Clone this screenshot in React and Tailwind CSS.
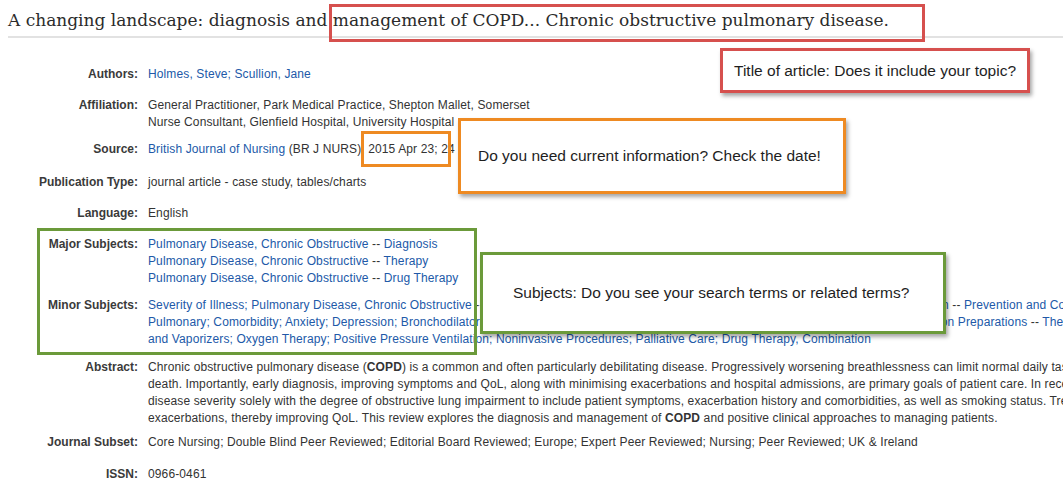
import React from 'react';

const LINK = 'text-[#2159a8]';

function Row({ label, mt, children }) {
  return (
    <div className={`flex leading-[17px] ${mt}`}>
      <div className="w-[148px] shrink-0 pr-[10px] text-right font-bold tracking-normal text-[#3a3a3a]">{label}</div>
      <div className="whitespace-nowrap text-[#333]">{children}</div>
    </div>
  );
}

function Sep() {
  return <span className="text-[#333]"> -- </span>;
}

export default function App() {
  return (
    <div className="relative h-[484px] w-[1063px] overflow-hidden bg-white font-['Liberation_Sans',Arial,sans-serif] text-[12px] tracking-[0.12px]">
      {/* Title */}
      <div className="pl-2 pt-2">
        <h1 className="whitespace-nowrap border-b-2 border-[#e2e2e2] pb-[4px] font-['DejaVu_Serif',Georgia,serif] text-[17px] leading-[24px] tracking-normal text-[#2b2b2b]">
          A changing landscape: diagnosis and{' '}
          <span className="relative inline-block">
            management of COPD... Chronic obstructive pulmonary disease.
            <span className="absolute -bottom-[10px] -left-[4px] -right-[36px] -top-[4px] border-[3px] border-[#d6504e]" />
          </span>
        </h1>
      </div>

      {/* Record */}
      <Row label="Authors:" mt="mt-[28px]">
        <span className={LINK}>Holmes, Steve; Scullion, Jane</span>
      </Row>
      <Row label="Affiliation:" mt="mt-[14px]">
        General Practitioner, Park Medical Practice, Shepton Mallet, Somerset
        <br />
        Nurse Consultant, Glenfield Hospital, University Hospital
      </Row>
      <Row label="Source:" mt="mt-[10px]">
        <span className={LINK}>British Journal of Nursing</span> (BR J NURS),{' '}
        <span className="relative inline-block">
          2015 Apr 23; 24
          <span className="absolute -left-[7px] -top-[10px] h-[36px] w-[90px] border-[3px] border-[#ee8a22]" />
        </span>
      </Row>
      <Row label="Publication Type:" mt="mt-[16px]">
        journal article - case study, tables/charts
      </Row>
      <Row label="Language:" mt="mt-[14px]">
        English
      </Row>
      <Row label="Major Subjects:" mt="mt-[14px]">
        <span className={LINK}>Pulmonary Disease, Chronic Obstructive</span>
        <Sep />
        <span className={LINK}>Diagnosis</span>
        <br />
        <span className={LINK}>Pulmonary Disease, Chronic Obstructive</span>
        <Sep />
        <span className={LINK}>Therapy</span>
        <br />
        <span className={LINK}>Pulmonary Disease, Chronic Obstructive</span>
        <Sep />
        <span className={LINK}>Drug Therapy</span>
      </Row>
      <Row label="Minor Subjects:" mt="mt-[10px]">
        <span className={LINK}>Severity of Illness; Pulmonary Disease, Chronic Obstructive</span>
        <Sep />
        <span className={LINK}>Risk Factors; Smoking; Dyspnea; Wheezing; Disease Progression; Patient Education</span>
        <Sep />
        <span className={LINK}>Prevention and Control; Rehabilitation,</span>
        <br />
        <span className={LINK}>
          Pulmonary; Comorbidity; Anxiety; Depression; Bronchodilator Agents -- Therapeutic Use; Aged; Inhaler; Administration, Inhalation; Drug Combination Preparations
        </span>
        <Sep />
        <span className={LINK}>Therapeutic Use; Nebulizers</span>
        <br />
        <span className={LINK}>
          and Vaporizers; Oxygen Therapy; Positive Pressure Ventilation; Noninvasive Procedures; Palliative Care; Drug Therapy, Combination
        </span>
      </Row>
      <Row label="Abstract:" mt="mt-[11px]">
        Chronic obstructive pulmonary disease (<b>COPD</b>) is a common and often particularly debilitating disease. Progressively worsening breathlessness can limit normal daily tasks and lead to
        <br />
        death. Importantly, early diagnosis, improving symptoms and QoL, along with minimising exacerbations and hospital admissions, are primary goals of patient care. In recent years
        <br />
        disease severity solely with the degree of obstructive lung impairment to include patient symptoms, exacerbation history and comorbidities, as well as smoking status. Treatment
        <br />
        exacerbations, thereby improving QoL. This review explores the diagnosis and management of <b>COPD</b> and positive clinical approaches to managing patients.
      </Row>
      <Row label="Journal Subset:" mt="mt-[7px]">
        Core Nursing; Double Blind Peer Reviewed; Editorial Board Reviewed; Europe; Expert Peer Reviewed; Nursing; Peer Reviewed; UK &amp; Ireland
      </Row>
      <Row label="ISSN:" mt="mt-[15px]">
        0966-0461
      </Row>

      {/* Callouts */}
      <div className="absolute left-[720px] top-[48px] flex h-[45px] w-[310px] items-center border-[3px] border-[#d6504e] bg-white pl-[11px] text-[15.5px] tracking-normal text-[#1e1e1e] shadow-[2px_3px_4px_rgba(0,0,0,0.35)]">
        Title of article: Does it include your topic?
      </div>

      <div className="absolute left-[458px] top-[118px] flex h-[76px] w-[388px] items-center border-[3px] border-[#ee8a22] bg-white pl-[17px] text-[15.5px] tracking-normal text-[#1e1e1e] shadow-[2px_3px_4px_rgba(0,0,0,0.35)]">
        Do you need current information? Check the date!
      </div>

      <div className="absolute left-[37px] top-[228px] h-[127px] w-[440px] border-[3px] border-[#6b9a3a]" />
      <div className="absolute left-[480px] top-[252px] flex h-[82px] w-[466px] items-center border-[3px] border-[#6b9a3a] bg-white pl-[30px] text-[15.5px] tracking-normal text-[#1e1e1e] shadow-[2px_3px_4px_rgba(0,0,0,0.35)]">
        Subjects: Do you see your search terms or related terms?
      </div>
    </div>
  );
}
